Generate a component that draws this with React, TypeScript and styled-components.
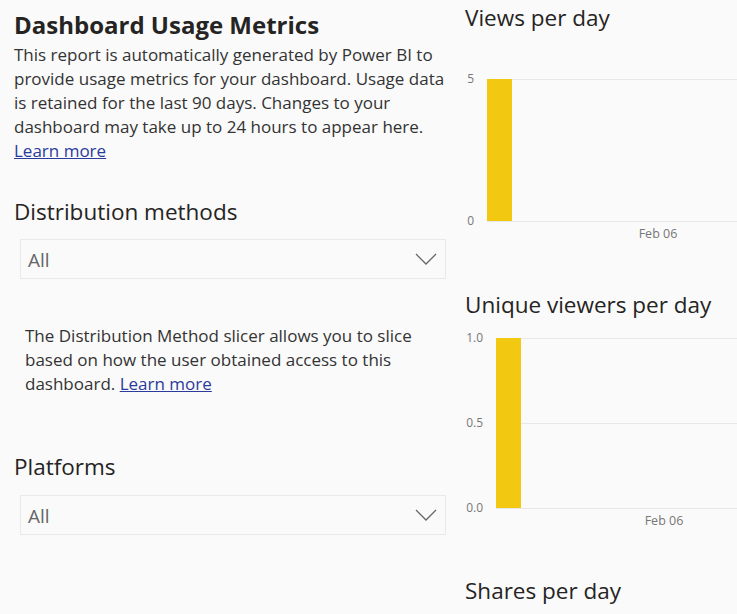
import React from "react";
import styled, { createGlobalStyle } from "styled-components";

const Global = createGlobalStyle`
  html, body { margin: 0; padding: 0; background: #fafafa; overflow: hidden; }
  body { font-family: "Open Sans", "Noto Sans", sans-serif; color: #252423; }
`;

const Page = styled.div`
  display: grid;
  grid-template-columns: 432px 1fr;
  column-gap: 19px;
  padding-left: 14px;
  width: 737px;
  height: 614px;
  box-sizing: border-box;
  overflow: hidden;
`;

const LeftCol = styled.div`
  display: flex;
  flex-direction: column;
  min-width: 0;
`;

const RightCol = styled.div`
  display: flex;
  flex-direction: column;
  min-width: 0;
  overflow: visible;
`;

const Title = styled.h1`
  margin: 9px 0 0;
  font-size: 24px;
  line-height: 32px;
  font-weight: 700;
  color: #252423;
  white-space: nowrap;
`;

const Para = styled.p<{ $indent?: number; $top: number; $width?: number }>`
  margin: ${(p) => p.$top}px 0 0 ${(p) => p.$indent ?? 0}px;
  max-width: ${(p) => (p.$width ? `${p.$width}px` : "none")};
  font-size: 17px;
  line-height: 24px;
  color: #333;
`;

const Link = styled.a`
  color: #2a3b9b;
  text-decoration: underline;
  cursor: pointer;
`;

const SectionHeading = styled.h2<{ $top: number }>`
  margin: ${(p) => p.$top}px 0 0;
  font-size: 22.5px;
  line-height: 30px;
  font-weight: 400;
  color: #252423;
`;

const Dropdown = styled.div<{ $top: number }>`
  margin: ${(p) => p.$top}px 0 0 6px;
  height: 40px;
  box-sizing: border-box;
  border: 1px solid #e9e9e9;
  background: #fafafa;
  display: flex;
  align-items: center;
  justify-content: space-between;
  padding: 2px 8px 0 7px;
`;

const DropdownValue = styled.span`
  font-size: 19px;
  color: #666;
`;

const ChartTitle = styled.h3<{ $top: number }>`
  margin: ${(p) => p.$top}px 0 0;
  font-size: 22.5px;
  line-height: 28px;
  font-weight: 400;
  color: #252423;
  white-space: nowrap;
`;

const ChartSvg = styled.svg`
  display: block;
  overflow: visible;
  font-family: "Open Sans", "Noto Sans", sans-serif;
`;

const Chevron = () => (
  <svg width="22" height="12" viewBox="0 0 22 12" style={{ marginTop: -2 }}>
    <path d="M1 1 L11 11 L21 1" fill="none" stroke="#666" strokeWidth="1.3" />
  </svg>
);

type ChartProps = {
  labels: { text: string; y: number }[];
  labelX: number;
  plotLeft: number;
  top: number;
  bottom: number;
  dateX: number;
};

const BarChart = ({ labels, labelX, plotLeft, top, bottom, dateX }: ChartProps) => (
  <ChartSvg width={300} height={220}>
    {labels.map((l) => (
      <line key={"g" + l.text} x1={plotLeft} x2={300} y1={l.y + 0.5} y2={l.y + 0.5} stroke="#e8e8e8" strokeWidth={1} />
    ))}
    <rect x={plotLeft} y={top} width={25} height={bottom - top} fill="#f2c811" />
    {labels.map((l) => (
      <text key={l.text} x={labelX} y={l.y + 4} textAnchor="end" fontSize={12} fill="#777">
        {l.text}
      </text>
    ))}
    <text x={dateX} y={206} textAnchor="middle" fontSize={12.5} fill="#777">
      Feb 06
    </text>
  </ChartSvg>
);

export default function App() {
  return (
    <>
      <Global />
      <Page>
        <LeftCol>
          <Title>Dashboard Usage Metrics</Title>
          <Para $top={2}>
            This report is automatically generated by Power BI to provide usage metrics for your dashboard. Usage data
            is retained for the last 90 days. Changes to your dashboard may take up to 24 hours to appear here.{" "}
            <Link>Learn more</Link>
          </Para>
          <SectionHeading $top={34}>Distribution methods</SectionHeading>
          <Dropdown $top={12}>
            <DropdownValue>All</DropdownValue>
            <Chevron />
          </Dropdown>
          <Para $top={45} $indent={11} $width={400}>
            The Distribution Method slicer allows you to slice based on how the user obtained access to this
            dashboard. <Link>Learn more</Link>
          </Para>
          <SectionHeading $top={56}>Platforms</SectionHeading>
          <Dropdown $top={13}>
            <DropdownValue>All</DropdownValue>
            <Chevron />
          </Dropdown>
        </LeftCol>
        <RightCol>
          <ChartTitle $top={4}>Views per day</ChartTitle>
          <BarChart
            labels={[
              { text: "5", y: 47 },
              { text: "0", y: 189 },
            ]}
            labelX={9}
            plotLeft={22}
            top={47}
            bottom={189}
            dateX={193}
          />
          <ChartTitle $top={39}>Unique viewers per day</ChartTitle>
          <BarChart
            labels={[
              { text: "1.0", y: 19 },
              { text: "0.5", y: 104 },
              { text: "0.0", y: 189 },
            ]}
            labelX={18}
            plotLeft={31}
            top={19}
            bottom={189}
            dateX={199}
          />
          <ChartTitle $top={38}>Shares per day</ChartTitle>
        </RightCol>
      </Page>
    </>
  );
}
